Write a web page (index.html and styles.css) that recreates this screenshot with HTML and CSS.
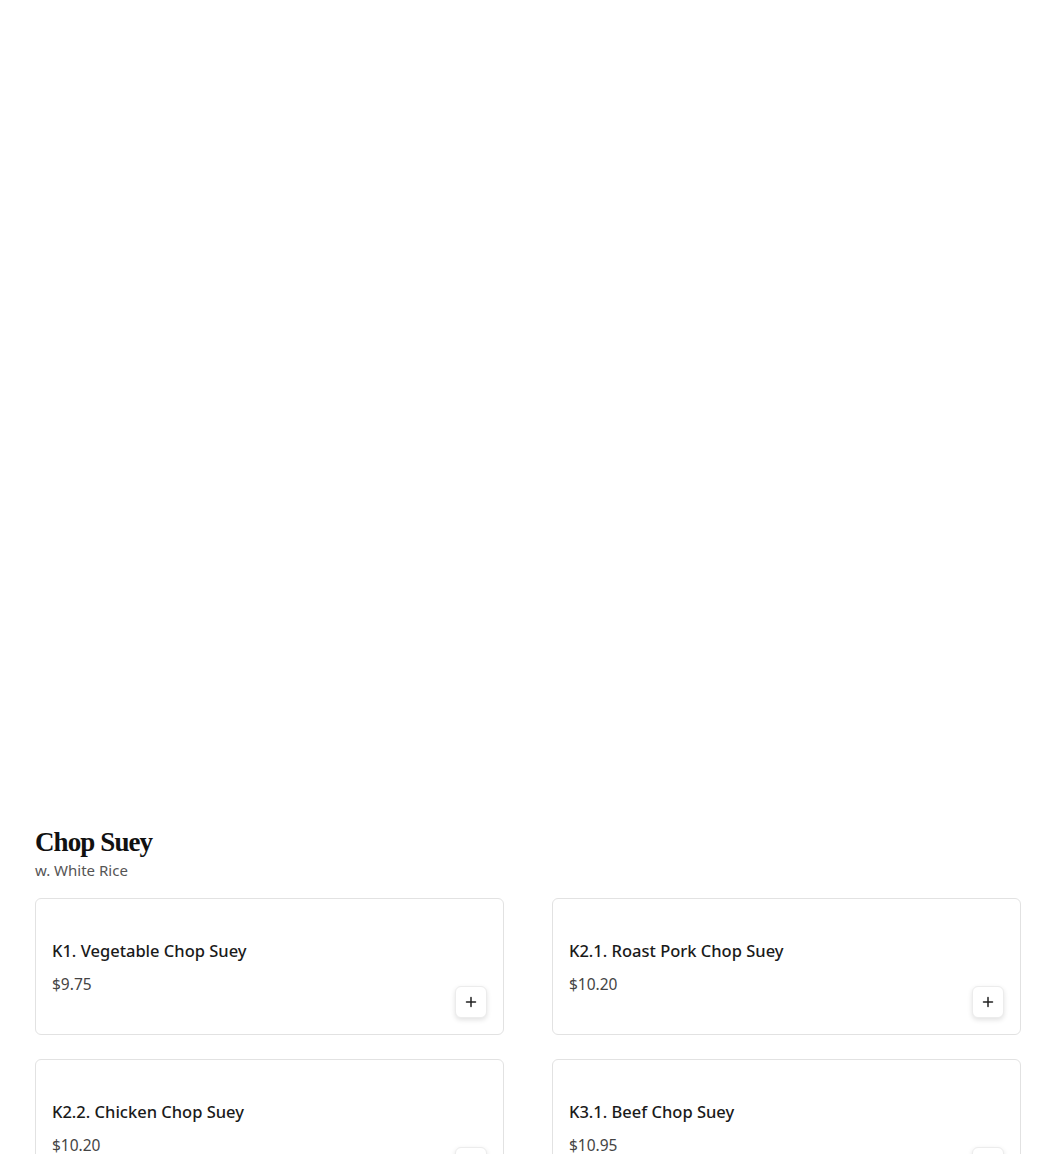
FILE: index.html
```html
<!DOCTYPE html>
<html lang="en">
<head>
    <meta charset="UTF-8">
    <meta name="viewport" content="width=device-width, initial-scale=1.0">
    <title>Chop Suey</title>
    <link rel="stylesheet" href="styles.css">
</head>
<body>
    <!-- Banner area (empty) -->
    <div class="banner"></div>

    <!-- Menu Category -->
    <section class="category">
        <h2>Chop Suey</h2>
        <p class="category-note">w. White Rice</p>

        <div class="item-grid">
            <div class="item-card">
                <div class="item-name">K1. Vegetable Chop Suey</div>
                <div class="item-row">
                    <span class="item-price">$9.75</span>
                    <button class="add-btn" aria-label="Add">
                        <svg width="12" height="12" viewBox="0 0 12 12"><path d="M6 1.5v9M1.5 6h9" stroke="#222" stroke-width="1.5" stroke-linecap="round"/></svg>
                    </button>
                </div>
            </div>
            <div class="item-card">
                <div class="item-name">K2.1. Roast Pork Chop Suey</div>
                <div class="item-row">
                    <span class="item-price">$10.20</span>
                    <button class="add-btn" aria-label="Add">
                        <svg width="12" height="12" viewBox="0 0 12 12"><path d="M6 1.5v9M1.5 6h9" stroke="#222" stroke-width="1.5" stroke-linecap="round"/></svg>
                    </button>
                </div>
            </div>
            <div class="item-card">
                <div class="item-name">K2.2. Chicken Chop Suey</div>
                <div class="item-row">
                    <span class="item-price">$10.20</span>
                    <button class="add-btn" aria-label="Add">
                        <svg width="12" height="12" viewBox="0 0 12 12"><path d="M6 1.5v9M1.5 6h9" stroke="#222" stroke-width="1.5" stroke-linecap="round"/></svg>
                    </button>
                </div>
            </div>
            <div class="item-card">
                <div class="item-name">K3.1. Beef Chop Suey</div>
                <div class="item-row">
                    <span class="item-price">$10.95</span>
                    <button class="add-btn" aria-label="Add">
                        <svg width="12" height="12" viewBox="0 0 12 12"><path d="M6 1.5v9M1.5 6h9" stroke="#222" stroke-width="1.5" stroke-linecap="round"/></svg>
                    </button>
                </div>
            </div>
        </div>
    </section>
</body>
</html>
```

FILE: styles.css
```css
/* General Styling */
body {
    margin: 0;
    padding: 0;
    background: #fff;
    font-family: "Noto Sans", Arial, sans-serif;
    color: #1a1a1a;
}

.banner {
    height: 825px;
}

/* Category */
.category {
    padding: 0 29px 0 35px;
}

.category h2 {
    margin: 0;
    font-family: "Liberation Serif", "Times New Roman", serif;
    font-weight: 900;
    font-size: 27px;
    line-height: 34px;
    letter-spacing: -0.9px;
    color: #111;
}

.category-note {
    margin: 0 0 17px;
    font-size: 15px;
    line-height: 22px;
    color: #555;
}

.item-grid {
    display: grid;
    grid-template-columns: 1fr 1fr;
    column-gap: 48px;
    row-gap: 24px;
}

/* Item cards */
.item-card {
    border: 1px solid #e2e2e2;
    border-radius: 6px;
    padding: 40px 16px 16px;
    background: #fff;
}

.item-name {
    font-size: 16.5px;
    line-height: 24px;
    font-weight: 500;
    color: #1a1a1a;
}

.item-row {
    display: flex;
    justify-content: space-between;
    align-items: flex-start;
    margin-top: 9px;
}

.item-price {
    font-size: 15.5px;
    line-height: 24px;
    color: #444;
}

.add-btn {
    margin-top: 14px;
    width: 32px;
    height: 32px;
    display: flex;
    align-items: center;
    justify-content: center;
    padding: 0;
    border: 1px solid #ececec;
    border-radius: 6px;
    background: #fff;
    box-shadow: 0 2px 5px rgba(0, 0, 0, 0.12);
    cursor: pointer;
}
```
